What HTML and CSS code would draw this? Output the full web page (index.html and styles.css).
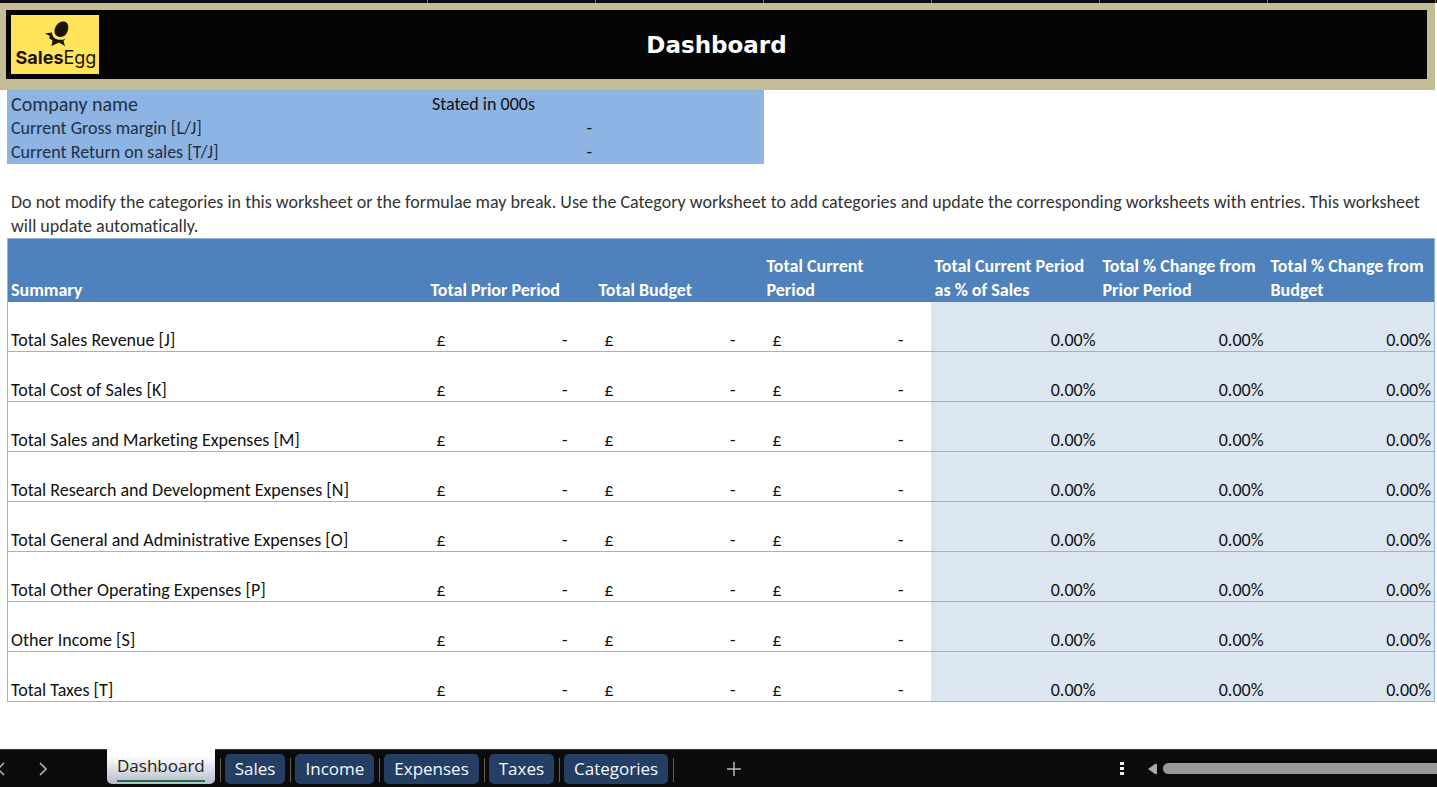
FILE: index.html
```html
<!DOCTYPE html>
<html lang="en">

<head>
    <meta charset="UTF-8">
    <meta name="viewport" content="width=device-width, initial-scale=1.0">
    <title>Dashboard</title>
    <link rel="stylesheet" href="styles.css">
</head>

<body>
    <!-- Column header strip -->
    <div class="columns-strip">
        <span></span><span></span><span></span><span></span><span></span><span></span><span></span>
    </div>

    <!-- Banner -->
    <header class="banner">
        <div class="logo">
            <svg class="logo-egg" viewBox="0 0 24 26" aria-hidden="true">
                <path d="M18 0.500C21.500 0.300 23.500 3 23.300 6.500C23 12 20 16 15.500 16C12 16 9.500 13.500 9.500 10.500C9.500 5.500 13 1 18 0.500Z" />
                <path d="M0 12.500L7 11.500C7 15.500 10 18.500 14 18.800C16 19 18 18.800 20.500 18L18.500 20L20 25L14 21.500L6.500 25L7.500 19.500L4 17L5 15Z" />
            </svg>
            <div class="logo-name"><b>Sales</b>Egg</div>
        </div>
        <h1>Dashboard</h1>
    </header>

    <main>
        <!-- Company info -->
        <table class="info">
            <colgroup>
                <col>
                <col class="col-value">
                <col class="col-value">
            </colgroup>
            <tr>
                <th scope="row" class="company">Company name</th>
                <td>Stated in 000s</td>
                <td></td>
            </tr>
            <tr>
                <th scope="row">Current Gross margin [L/J]</th>
                <td class="number">-</td>
                <td></td>
            </tr>
            <tr>
                <th scope="row">Current Return on sales [T/J]</th>
                <td class="number">-</td>
                <td></td>
            </tr>
        </table>

        <p class="note">Do not modify the categories in this worksheet or the formulae may break. Use the Category worksheet to add categories and update the corresponding worksheets with entries. This worksheet will update automatically.</p>

        <!-- Summary -->
        <table class="summary">
            <colgroup>
                <col>
                <col class="col-value" span="6">
            </colgroup>
            <thead>
                <tr>
                    <th scope="col">Summary</th>
                    <th scope="col">Total Prior Period</th>
                    <th scope="col">Total Budget</th>
                    <th scope="col">Total Current<br>Period</th>
                    <th scope="col">Total Current Period as % of Sales</th>
                    <th scope="col">Total % Change from Prior Period</th>
                    <th scope="col">Total % Change from Budget</th>
                </tr>
            </thead>
            <tbody>
                <tr>
                    <th scope="row">Total Sales Revenue [J]</th>
                    <td><div class="money"><span>£</span><span>-</span></div></td>
                    <td><div class="money"><span>£</span><span>-</span></div></td>
                    <td><div class="money"><span>£</span><span>-</span></div></td>
                    <td class="percent">0.00%</td>
                    <td class="percent">0.00%</td>
                    <td class="percent">0.00%</td>
                </tr>
                <tr>
                    <th scope="row">Total Cost of Sales [K]</th>
                    <td><div class="money"><span>£</span><span>-</span></div></td>
                    <td><div class="money"><span>£</span><span>-</span></div></td>
                    <td><div class="money"><span>£</span><span>-</span></div></td>
                    <td class="percent">0.00%</td>
                    <td class="percent">0.00%</td>
                    <td class="percent">0.00%</td>
                </tr>
                <tr>
                    <th scope="row">Total Sales and Marketing Expenses [M]</th>
                    <td><div class="money"><span>£</span><span>-</span></div></td>
                    <td><div class="money"><span>£</span><span>-</span></div></td>
                    <td><div class="money"><span>£</span><span>-</span></div></td>
                    <td class="percent">0.00%</td>
                    <td class="percent">0.00%</td>
                    <td class="percent">0.00%</td>
                </tr>
                <tr>
                    <th scope="row">Total Research and Development Expenses [N]</th>
                    <td><div class="money"><span>£</span><span>-</span></div></td>
                    <td><div class="money"><span>£</span><span>-</span></div></td>
                    <td><div class="money"><span>£</span><span>-</span></div></td>
                    <td class="percent">0.00%</td>
                    <td class="percent">0.00%</td>
                    <td class="percent">0.00%</td>
                </tr>
                <tr>
                    <th scope="row">Total General and Administrative Expenses [O]</th>
                    <td><div class="money"><span>£</span><span>-</span></div></td>
                    <td><div class="money"><span>£</span><span>-</span></div></td>
                    <td><div class="money"><span>£</span><span>-</span></div></td>
                    <td class="percent">0.00%</td>
                    <td class="percent">0.00%</td>
                    <td class="percent">0.00%</td>
                </tr>
                <tr>
                    <th scope="row">Total Other Operating Expenses [P]</th>
                    <td><div class="money"><span>£</span><span>-</span></div></td>
                    <td><div class="money"><span>£</span><span>-</span></div></td>
                    <td><div class="money"><span>£</span><span>-</span></div></td>
                    <td class="percent">0.00%</td>
                    <td class="percent">0.00%</td>
                    <td class="percent">0.00%</td>
                </tr>
                <tr>
                    <th scope="row">Other Income [S]</th>
                    <td><div class="money"><span>£</span><span>-</span></div></td>
                    <td><div class="money"><span>£</span><span>-</span></div></td>
                    <td><div class="money"><span>£</span><span>-</span></div></td>
                    <td class="percent">0.00%</td>
                    <td class="percent">0.00%</td>
                    <td class="percent">0.00%</td>
                </tr>
                <tr>
                    <th scope="row">Total Taxes [T]</th>
                    <td><div class="money"><span>£</span><span>-</span></div></td>
                    <td><div class="money"><span>£</span><span>-</span></div></td>
                    <td><div class="money"><span>£</span><span>-</span></div></td>
                    <td class="percent">0.00%</td>
                    <td class="percent">0.00%</td>
                    <td class="percent">0.00%</td>
                </tr>
            </tbody>
        </table>
    </main>

    <!-- Sheet tabs -->
    <footer class="tab-bar">
        <div class="arrows">
            <button type="button" class="icon-btn" aria-label="Previous sheet">
                <svg width="10" height="14" viewBox="0 0 10 14"><path d="M8 1L2 7L8 13" /></svg>
            </button>
            <button type="button" class="icon-btn" aria-label="Next sheet">
                <svg width="10" height="14" viewBox="0 0 10 14"><path d="M2 1L8 7L2 13" /></svg>
            </button>
        </div>
        <nav class="tabs">
            <button type="button" class="tab active"><span>Dashboard</span></button>
            <button type="button" class="tab">Sales</button>
            <button type="button" class="tab">Income</button>
            <button type="button" class="tab">Expenses</button>
            <button type="button" class="tab">Taxes</button>
            <button type="button" class="tab">Categories</button>
        </nav>
        <button type="button" class="icon-btn add-sheet" aria-label="Add sheet">
            <svg width="14" height="14" viewBox="0 0 14 14"><path d="M7 0V14M0 7H14" /></svg>
        </button>
        <div class="scroll">
            <button type="button" class="icon-btn" aria-label="Resize tabs">
                <svg class="solid" width="4" height="14" viewBox="0 0 4 14"><path d="M0 0H4V3H0ZM0 5H4V8H0ZM0 10H4V13H0Z" /></svg>
            </button>
            <button type="button" class="icon-btn scroll-left" aria-label="Scroll left">
                <svg class="solid gray" width="10" height="12" viewBox="0 0 10 12"><path d="M0 6L7 1Q9 0 9 2V10Q9 12 7 11Z" /></svg>
            </button>
            <div class="scroll-thumb"></div>
        </div>
    </footer>
</body>

</html>
```

FILE: styles.css
```css
/* General */
* {
    box-sizing: border-box;
}

body {
    margin: 0;
    min-height: 100vh;
    display: flex;
    flex-direction: column;
    font-family: Carlito, Lato, sans-serif;
    font-size: 18px;
    font-variant-ligatures: none;
    line-height: 24px;
    background: #fff;
    color: #111;
}

button {
    border: none;
    background: none;
    padding: 0;
    cursor: pointer;
}

.columns-strip {
    height: 3px;
    display: grid;
    grid-template-columns: 1fr repeat(6, 168px);
    padding-right: 1px;
    background: #0a0a10;
}

.columns-strip span {
    border-right: 1px solid #777;
}

/* Banner */
.banner {
    display: grid;
    grid-template-columns: 1fr auto 1fr;
    align-items: center;
    height: 87px;
    margin-right: 2px;
    padding: 0 5px;
    border: solid #c4bc96;
    border-width: 7px 8px 11px 6px;
    background: #050505;
}

.banner h1 {
    margin: 0;
    color: #fff;
    font-family: "DejaVu Sans", sans-serif;
    font-size: 23px;
}

.logo {
    width: 88px;
    height: 59px;
    padding: 6px 0 0 2px;
    background: #ffe45c;
    color: #1c1408;
    text-align: center;
}

.logo-egg {
    display: block;
    width: 24px;
    height: 26px;
    margin-left: 32px;
    fill: #1c1408;
}

.logo-name {
    font-family: Inter, sans-serif;
    font-size: 18px;
    line-height: 22px;
}

/* Tables */
main {
    flex: 1;
    padding: 0 2px 0 7px;
}

table {
    width: 100%;
    table-layout: fixed;
    border-collapse: collapse;
}

th,
td {
    padding: 0 4px;
    text-align: left;
    font-weight: normal;
}

.col-value {
    width: 168px;
}

.info {
    width: calc(100% - 671px);
    background: #8db4e2;
}

.info th {
    color: #1f2f45;
}

.info td,
.info th {
    height: 24px;
    vertical-align: bottom;
}

.info .company {
    height: 26px;
    font-size: 20px;
}

.info .number {
    text-align: right;
}

.note {
    margin: 26px 0 0;
    padding: 0 4px;
    color: #333;
}

.summary {
    border: 1px solid #95b3d7;
}

.summary th,
.summary td {
    padding: 0 3px 0 4px;
    vertical-align: bottom;
}

.summary th:first-child {
    padding-left: 3px;
}

.summary thead th {
    height: 63px;
    background: #4f81bd;
    color: #fff;
    font-weight: bold;
}

.summary tbody tr {
    height: 50px;
    border-bottom: 1px solid #95b3d7;
}

.summary tbody th,
.summary tbody td {
    line-height: 22px;
}

.money {
    display: flex;
    justify-content: space-between;
    padding: 0 24px 0 6px;
}

.summary .percent {
    text-align: right;
    background: #dce6f1;
}

/* Sheet tabs */
.tab-bar {
    display: flex;
    height: 38px;
    background: #0b0b0b;
    border-top: 1px solid #333;
}

.arrows {
    display: flex;
    width: 107px;
    gap: 32px;
    margin-left: -4px;
}

.icon-btn {
    display: flex;
    align-items: center;
}

.icon-btn svg {
    fill: none;
    stroke: #bbb;
    stroke-width: 1.5;
}

.icon-btn .solid {
    fill: #eee;
    stroke: none;
}

.icon-btn .gray {
    fill: #aaa;
}

.tabs {
    display: flex;
    align-items: flex-start;
    margin-left: 4px;
}

.tab {
    position: relative;
    height: 30px;
    margin: 4px 10px 0 0;
    padding: 0 10px;
    border-radius: 5px;
    background: #243f63;
    color: #f4f8ff;
    font-family: "Open Sans", sans-serif;
    font-size: 17px;
    line-height: 30px;
}

/* Divider after each tab */
.tab::after {
    content: "";
    position: absolute;
    top: 4px;
    right: -6px;
    width: 1px;
    height: 24px;
    background: #6b5c45;
}

.tab.active {
    height: 35px;
    margin-top: -1px;
    border-radius: 0 0 5px 5px;
    background: linear-gradient(#fff 20%, #b4bccb);
    color: #222;
}

.tab.active::after {
    top: 9px;
}

.tab.active span {
    display: block;
    line-height: 28px;
    border-bottom: 2px solid #217346;
}

.add-sheet {
    margin-left: 49px;
}

.scroll {
    flex: 1;
    display: flex;
    align-items: center;
    justify-content: flex-end;
}

.scroll-left {
    margin: 0 5px 0 24px;
}

.scroll-thumb {
    width: 274px;
    height: 11px;
    border-radius: 6px 0 0 6px;
    background: #999;
}
```
